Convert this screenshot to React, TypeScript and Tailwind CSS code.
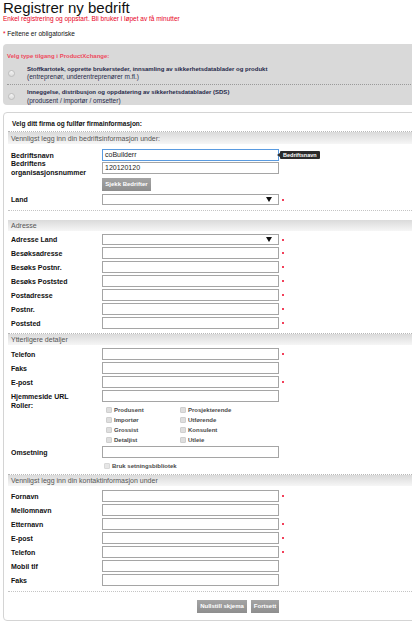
import React from "react";

const Req = () => (
  <span className="ml-[3px] inline-block w-[2px] h-[2px] bg-[#f2405a]" />
);

const Arrow = () => (
  <svg width="6" height="5" viewBox="0 0 6 5" className="absolute right-[6px] top-[2px]">
    <polygon points="0,0 6,0 3,5" fill="#111" />
  </svg>
);

type RowProps = {
  label: React.ReactNode;
  req?: boolean;
  value?: string;
  focused?: boolean;
  select?: boolean;
  className?: string;
  children?: React.ReactNode;
};

const Row = ({ label, req, value, focused, select, className, children }: RowProps) => (
  <div className={`relative flex items-center ${select ? "h-[11px]" : "h-[12px]"} ${className ?? ""}`}>
    <div className="w-[91px] shrink-0 text-[7px] font-bold leading-[9px] text-[#111]">{label}</div>
    <div
      className={`relative w-[177px] shrink-0 ${select ? "h-[11px]" : "h-[12px]"} border ${
        focused ? "border-[#5a9be0]" : "border-[#a5a5a5]"
      } bg-white pl-[2px] text-[7px] leading-[10px] text-[#222]`}
    >
      {value}
      {select && <Arrow />}
    </div>
    {req && <Req />}
    {children}
  </div>
);

const Band = ({ children, dotted }: { children: React.ReactNode; dotted?: boolean }) => (
  <div className={dotted ? "border-t border-dotted border-[#b8b8b8]" : ""}>
    <div className="h-[11px] bg-gradient-to-b from-[#dadada] to-[#f6f6f6] pl-[3px] text-[7px] leading-[12px] text-[#555]">
      {children}
    </div>
  </div>
);

const Check = ({ label }: { label: string }) => (
  <div className="flex items-center h-[10px]">
    <span className="w-[6px] h-[6px] rounded-[1px] bg-[#dedede] border border-[#cfcfcf] mr-[2px]" />
    <span className="text-[6px] font-bold text-[#4a4a4a]">{label}</span>
  </div>
);

const Radio = () => (
  <span className="w-[7px] h-[7px] shrink-0 rounded-full border border-[#bdbdbd] bg-gradient-to-b from-[#f4f4f4] to-[#dcdcdc]" />
);

export default function App() {
  return (
    <div className="relative w-[412px] h-[621px] overflow-hidden bg-white font-['Liberation_Sans',Arial,sans-serif]">
      <div className="pl-[3px] text-[15px] leading-[15px] h-[15px] text-[#111]">Registrer ny bedrift</div>
      <div className="pl-[3px] text-[6.5px] leading-[8px] text-[#e8001c]">
        Enkel registrering og oppstart. Bli bruker i løpet av få minutter
      </div>
      <div className="mt-[7px] pl-[3px] text-[6.5px] leading-[8px] text-[#111]">
        <span className="text-[#e8001c]">*</span> Feltene er obligatoriske
      </div>

      {/* access type box */}
      <div className="mt-[6px] ml-[3px] w-[440px] rounded-[4px] bg-[#d9d9d9] pt-[8px] pb-[1px]">
        <div className="pl-[4px] text-[6px] font-bold leading-[8px] text-[#ee4b5e]">
          Velg type tilgang i ProductXchange:
        </div>
        <div className="mt-[6px] flex items-center pl-[5px]">
          <Radio />
          <div className="ml-[12px] text-[#26294a] leading-[7px]">
            <div className="text-[6px] font-bold">
              Stoffkartotek, opprette brukersteder, innsamling av sikkerhetsdatablader og produkt
            </div>
            <div className="text-[6.5px]">(entreprenør, underentreprenører m.fl.)</div>
          </div>
        </div>
        <div className="mt-[4px] ml-[4px] border-t border-dotted border-[#9a9a9a]" />
        <div className="mt-[4px] flex items-center pl-[5px]">
          <Radio />
          <div className="ml-[12px] text-[#26294a] leading-[7.5px]">
            <div className="text-[6px] font-bold">
              Inneggelse, distribusjon og oppdatering av sikkerhetsdatablader (SDS)
            </div>
            <div className="text-[6.5px]">(produsent / importør / omsetter)</div>
          </div>
        </div>
      </div>

      {/* main panel */}
      <div className="mt-[7px] ml-[3px] w-[440px] rounded-[4px] border border-[#d4d4d4] px-[4px] pb-[7px]">
        <div className="mt-[7px] pl-[4px] text-[6.5px] font-bold leading-[8px] text-[#111]">
          Velg ditt firma og fullfør firmainformasjon:
        </div>

        <div className="mt-[3px] border-t border-dotted border-[#b8b8b8]">
          <div className="h-[12px] bg-gradient-to-b from-[#dadada] to-[#f6f6f6] pl-[3px] text-[7px] leading-[13px] text-[#555]">
            Vennligst legg inn din bedriftsinformasjon under:
          </div>
        </div>

        <div className="pl-[3px]">
          <Row label="Bedriftsnavn" value="coBuilderr" focused className="mt-[5px]">
            <div className="absolute left-[266px] top-[2px] flex items-center">
              <span className="w-0 h-0 border-y-[2px] border-y-transparent border-r-[3px] border-r-[#2b2b2b]" />
              <span className="rounded-[1px] bg-[#2b2b2b] px-[3px] text-[5.5px] font-bold leading-[8px] text-white">
                Bedriftsnavn
              </span>
            </div>
          </Row>
          <Row
            label={
              <>
                Bedriftens
                <br />
                organisasjonsnummer
              </>
            }
            value="120120120"
            className="mt-[1px]"
          />
          <div className="mt-[4px] ml-[91px] flex">
            <div className="h-[13px] w-[49px] bg-gradient-to-b from-[#a4a4a4] to-[#8e8e8e] text-center text-[6px] font-bold leading-[13px] text-white">
              Sjekk Bedrifter
            </div>
          </div>
          <Row label="Land" select req className="mt-[3px]" />
        </div>

        <div className="mt-[5px] border-t border-dotted border-[#c4c4c4]" />

        <div className="mt-[9px]">
          <Band>Adresse</Band>
        </div>
        <div className="pl-[3px]">
          <Row label="Adresse Land" select req className="mt-[3px]" />
          <Row label="Besøksadresse" req className="mt-[2px]" />
          <Row label="Besøks Postnr." req className="mt-[2px]" />
          <Row label="Besøks Poststed" req className="mt-[2px]" />
          <Row label="Postadresse" req className="mt-[2px]" />
          <Row label="Postnr." req className="mt-[2px]" />
          <Row label="Poststed" req className="mt-[2px]" />
        </div>

        <div className="mt-[4px]">
          <Band dotted>Ytterligere detaljer</Band>
        </div>
        <div className="pl-[3px]">
          <Row label="Telefon" req className="mt-[3px]" />
          <Row label="Faks" className="mt-[2px]" />
          <Row label="E-post" req className="mt-[2px]" />
          <Row label="Hjemmeside URL" className="mt-[2px]" />
          <div className="flex items-start">
            <div className="w-[91px] shrink-0 text-[7px] font-bold leading-[8px] text-[#111]">Roller:</div>
            <div className="pt-[3px] pl-[4px] grid grid-cols-[74px_80px]">
              <Check label="Produsent" />
              <Check label="Prosjekterende" />
              <Check label="Importør" />
              <Check label="Utførende" />
              <Check label="Grossist" />
              <Check label="Konsulent" />
              <Check label="Detaljist" />
              <Check label="Utleie" />
            </div>
          </div>
          <Row label="Omsetning" className="mt-[1px]" />
          <div className="mt-[3px] h-[10px] flex items-center pl-[93px]">
            <span className="w-[6px] h-[6px] rounded-[1px] bg-[#e6e6e6] border border-[#d8d8d8] mr-[2px]" />
            <span className="text-[6px] font-bold text-[#4a4a4a]">Bruk setningsbibliotek</span>
          </div>
        </div>

        <div className="mt-[3px]">
          <Band dotted>Vennligst legg inn din kontaktinformasjon under</Band>
        </div>
        <div className="pl-[3px]">
          <Row label="Fornavn" req className="mt-[4px]" />
          <Row label="Mellomnavn" className="mt-[2px]" />
          <Row label="Etternavn" req className="mt-[2px]" />
          <Row label="E-post" req className="mt-[2px]" />
          <Row label="Telefon" req className="mt-[2px]" />
          <Row label="Mobil tlf" className="mt-[2px]" />
          <Row label="Faks" className="mt-[2px]" />
        </div>

        <div className="mt-[5px] border-t border-dotted border-[#c4c4c4]" />

        <div className="mt-[8px] pl-[3px]">
          <div className="w-[268px] flex justify-end gap-[4px]">
            <div className="h-[13px] w-[50px] bg-gradient-to-b from-[#a4a4a4] to-[#8e8e8e] text-center text-[6px] font-bold leading-[13px] text-white">
              Nullstill skjema
            </div>
            <div className="h-[13px] w-[28px] bg-gradient-to-b from-[#a4a4a4] to-[#8e8e8e] text-center text-[6px] font-bold leading-[13px] text-white">
              Fortsett
            </div>
          </div>
        </div>
      </div>
    </div>
  );
}
